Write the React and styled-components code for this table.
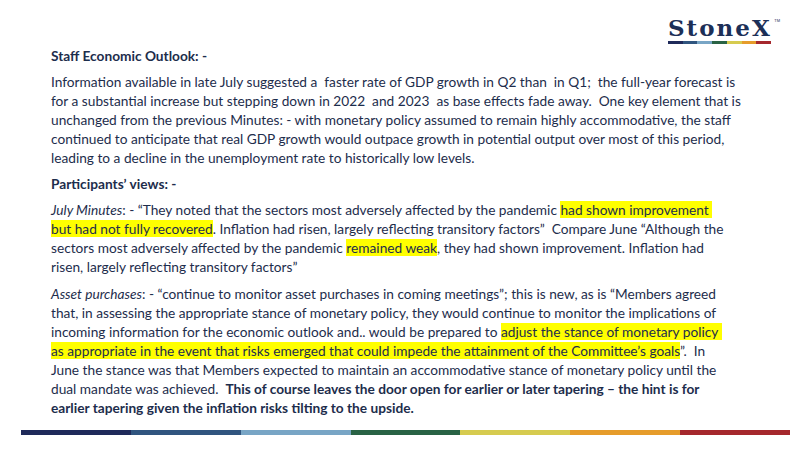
import React from "react";
import styled, { createGlobalStyle } from "styled-components";

const Global = createGlobalStyle`
  html, body { margin: 0; padding: 0; background: #ffffff; }
  #root { width: 800px; height: 450px; }
`;

const Page = styled.div`
  width: 800px;
  height: 450px;
  background: #ffffff;
  display: flex;
  flex-direction: column;
  overflow: hidden;
`;

const Header = styled.header`
  display: flex;
  justify-content: flex-end;
  padding: 15px 29px 0 0;
`;

const Logo = styled.div`
  display: flex;
  flex-direction: column;
  width: 103px;
`;

const LogoText = styled.div`
  position: relative;
  font-family: "DejaVu Serif", "Liberation Serif", serif;
  font-weight: 700;
  font-size: 23px;
  line-height: 26px;
  letter-spacing: 2px;
  color: #1c2f57;
  white-space: nowrap;
`;

const Tm = styled.span`
  position: absolute;
  right: -9px;
  top: 4px;
  font-family: "Liberation Sans", sans-serif;
  font-size: 4px;
  line-height: 4px;
  letter-spacing: 0;
  font-weight: 400;
`;

const StripeBar = styled.div`
  display: grid;
  grid-template-columns: repeat(7, 1fr);
  height: ${(p) => p.$h}px;
  margin: ${(p) => p.$m};
`;

const Stripe = styled.div`
  background: ${(p) => p.$c};
`;

const Content = styled.main`
  padding: 1.5px 0 0 51px;
  display: flex;
  flex-direction: column;
  gap: 7px;
  font-family: Lato, "Open Sans", sans-serif;
  font-size: 13.7px;
  line-height: 19.1px;
  color: #1d2d4c;
`;

const Heading = styled.div`
  font-weight: 700;
  white-space: pre;
`;

const Para = styled.p`
  margin: 0;
  white-space: pre;
`;

const Hl = styled.span`
  background: #ffff00;
`;

const Label = styled.em`
  font-style: italic;
`;

const Strong = styled.strong`
  font-weight: 700;
`;

const colors = ["#1f2a5a", "#30557f", "#78a5c5", "#296345", "#d6cb4f", "#e69c2b", "#a5282d"];

const Stripes = ({ h, m }) => (
  <StripeBar $h={h} $m={m}>
    {colors.map((c) => (
      <Stripe key={c} $c={c} />
    ))}
  </StripeBar>
);

export default function App() {
  return (
    <>
      <Global />
      <Page>
        <Header>
          <Logo>
            <LogoText>
              StoneX<Tm>TM</Tm>
            </LogoText>
            <Stripes h={3} m="0 0 0 0" />
          </Logo>
        </Header>
        <Content>
          <Heading>Staff Economic Outlook: -</Heading>
          <Para>
            {"Information available in late July suggested a  faster rate of GDP growth in Q2 than  in Q1;  the full-year forecast is"}
            <br />
            {"for a substantial increase but stepping down in 2022  and 2023  as base effects fade away.  One key element that is"}
            <br />
            {"unchanged from the previous Minutes: - with monetary policy assumed to remain highly accommodative, the staff"}
            <br />
            {"continued to anticipate that real GDP growth would outpace growth in potential output over most of this period,"}
            <br />
            {"leading to a decline in the unemployment rate to historically low levels."}
          </Para>
          <Heading>Participants’ views: -</Heading>
          <Para>
            <Label>July Minutes</Label>
            {": - “They noted that the sectors most adversely affected by the pandemic "}
            <Hl>{"had shown improvement "}</Hl>
            <br />
            <Hl>but had not fully recovered</Hl>
            {". Inflation had risen, largely reflecting transitory factors”  Compare June “Although the"}
            <br />
            {"sectors most adversely affected by the pandemic "}
            <Hl>remained weak</Hl>
            {", they had shown improvement. Inflation had"}
            <br />
            {"risen, largely reflecting transitory factors”"}
          </Para>
          <Para>
            <Label>Asset purchases</Label>
            {": - “continue to monitor asset purchases in coming meetings”; this is new, as is “Members agreed"}
            <br />
            {"that, in assessing the appropriate stance of monetary policy, they would continue to monitor the implications of"}
            <br />
            {"incoming information for the economic outlook and.. would be prepared to "}
            <Hl>{"adjust the stance of monetary policy "}</Hl>
            <br />
            <Hl>as appropriate in the event that risks emerged that could impede the attainment of the Committee’s goals</Hl>
            {"”.  In"}
            <br />
            {"June the stance was that Members expected to maintain an accommodative stance of monetary policy until the"}
            <br />
            {"dual mandate was achieved.  "}
            <Strong>This of course leaves the door open for earlier or later tapering – the hint is for</Strong>
            <br />
            <Strong>earlier tapering given the inflation risks tilting to the upside.</Strong>
          </Para>
        </Content>
        <Stripes h={5} m="13px 10px 0 21px" />
      </Page>
    </>
  );
}
